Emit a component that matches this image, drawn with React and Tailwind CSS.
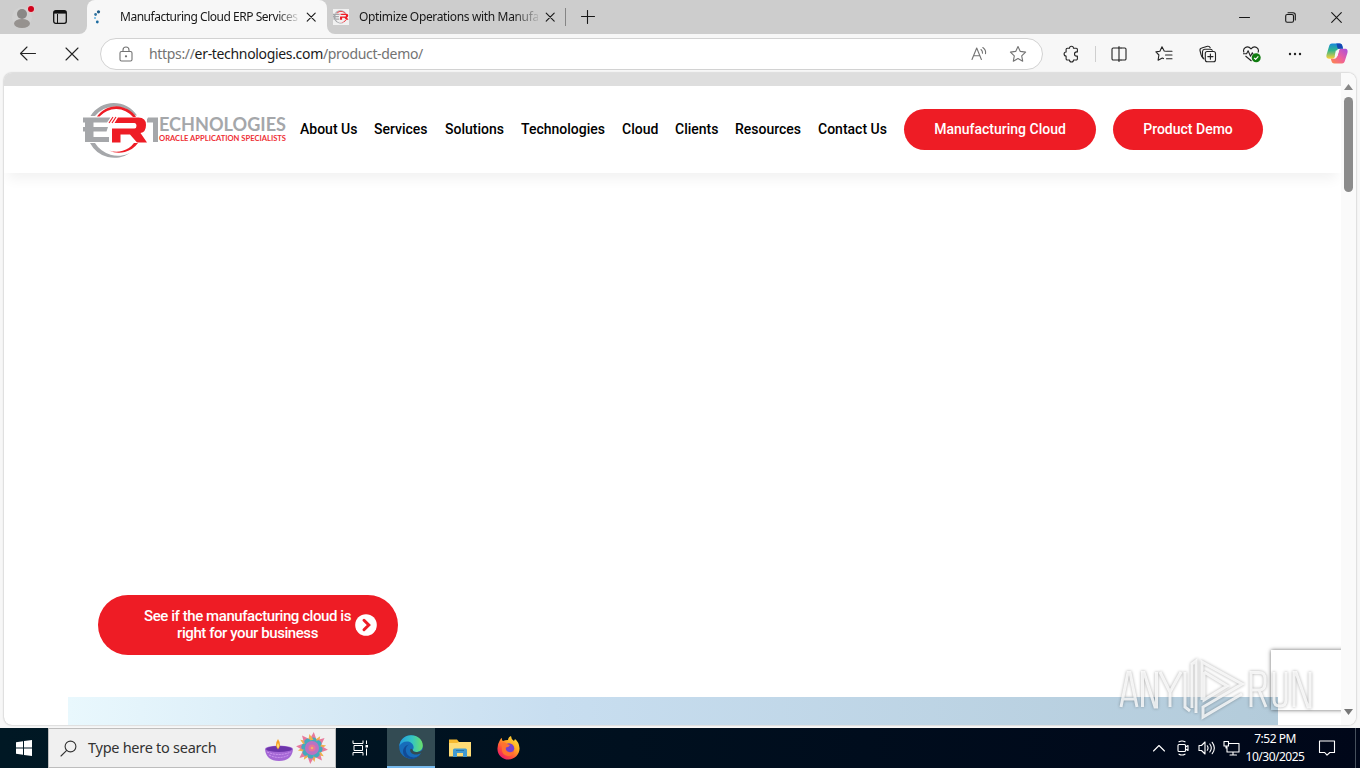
const navLinks = [
  { label: 'About Us', width: 'w-[57px]' },
  { label: 'Services', width: 'w-[54px]' },
  { label: 'Solutions', width: 'w-[59px]' },
  { label: 'Technologies', width: 'w-[84px]' },
  { label: 'Cloud', width: 'w-[36px]' },
  { label: 'Clients', width: 'w-[43px]' },
  { label: 'Resources', width: 'w-[66px]' },
  { label: 'Contact Us', width: 'w-[69px]' },
]

const Icon = ({ children, size = 18, className = '' }) => (
  <svg
    width={size}
    height={size}
    viewBox={`0 0 ${size} ${size}`}
    fill="none"
    stroke="currentColor"
    strokeWidth="1.1"
    strokeLinecap="round"
    strokeLinejoin="round"
    className={`shrink-0 ${className}`}
  >
    {children}
  </svg>
)

const CloseIcon = () => (
  <Icon size={10}>
    <path d="M1.200 1.200l8 8M9.200 1.200l-8 8" />
  </Icon>
)

const ErMark = ({ size, className = '' }) => (
  <svg
    width={size}
    height={(size * 56) / 66}
    viewBox="0 0 66 56"
    className={`shrink-0 ${className}`}
  >
    <path
      d="M7.500 14A27.500 27.500 0 0 1 54 13.500L51.500 13.500A25.500 25.500 0 0 0 12 14ZM7 41A27.500 27.500 0 0 0 47 51A27 27 0 0 1 12 41Z"
      fill="#a5a7aa"
    />
    <path
      d="M14 14.500A23.500 23.500 0 0 1 53 15L50 15A22 22 0 0 0 16.500 14.500ZM26 48.500A23.500 23.500 0 0 0 55 41L51 41A22 22 0 0 1 26 48.500Z"
      fill="#ee1c25"
    />
    <path
      d="M0 15.500H27.500L24 20.500H10.500V25H25L23.500 29.500H10.500V35H26V40H2V29.500H0V25H2V20.500H0Z"
      fill="#a5a7aa"
    />
    <path d="M26 21L30 15M29 21L33 15" stroke="#ee1c25" strokeWidth="1.2" />
    <path
      d="M35 15.500H55.500Q63 15.500 63 23Q63 30 57.500 31L64 40.500H54L47 32.500H37.500V40.500H29V26.500H51.500Q53.500 26.500 53.500 23.800T51.500 21H31.500Z"
      fill="#ee1c25"
    />
  </svg>
)

const TabStrip = () => (
  <div className="flex h-[34px] shrink-0 bg-[#f7f7f7]">
    <div className="flex w-[87px] shrink-0 items-center rounded-br-lg bg-[#cdcdcd] pl-3">
      <svg width="24" height="28" viewBox="0 0 24 28">
        <circle cx="10" cy="14" r="10" fill="#d6d6d6" opacity=".5" />
        <circle cx="10" cy="11" r="5" fill="#8a8886" />
        <ellipse cx="10" cy="20.500" rx="8" ry="4.500" fill="#96928f" />
        <circle cx="19" cy="6" r="4" fill="#e7c6c8" />
        <circle cx="19" cy="6" r="3" fill="#d0021b" />
      </svg>
      <svg
        width="14"
        height="14"
        viewBox="0 0 14 14"
        fill="none"
        stroke="#111"
        className="ml-[17px]"
      >
        <rect x=".7" y=".7" width="12.6" height="12.6" rx="2" strokeWidth="1.3" />
        <path d="M1 2.300h12" strokeWidth="2.600" />
        <path d="M4.500 4v9" />
      </svg>
    </div>

    <div className="flex w-[240px] shrink-0 bg-[#cdcdcd]">
      <div className="flex grow items-center rounded-t-lg bg-[#f7f7f7] pl-[6px]">
        <svg width="12" height="16" viewBox="0 0 12 16" fill="none">
          <circle cx="5.500" cy="2.800" r="1.600" fill="#1d5b87" />
          <circle cx="2.600" cy="5.500" r="1.400" fill="#3476a2" />
          <circle cx="2" cy="9" r="1" fill="#64b4e2" />
          <circle cx="4.300" cy="13" r="1.400" fill="#1b6ba0" />
        </svg>
        <span className="ml-[15px] w-[178px] overflow-hidden whitespace-nowrap bg-linear-to-r from-[#171717] from-88% to-[#17171720] bg-clip-text text-[12px] tracking-[-0.48px] text-transparent">
          Manufacturing Cloud ERP Services
        </span>
        <span className="ml-[8px]">
          <CloseIcon />
        </span>
      </div>
    </div>

    <div className="flex grow rounded-bl-lg bg-[#cdcdcd]">
      <div className="flex w-[238px] shrink-0 items-center pl-[6px]">
        <span className="flex h-4 w-4 items-center justify-center bg-[#f1f1f1]">
          <ErMark size={16} />
        </span>
        <span className="ml-[10px] w-[179px] overflow-hidden whitespace-nowrap bg-linear-to-r from-[#171717] from-86% to-[#17171720] bg-clip-text text-[12px] tracking-[-0.35px] text-transparent">
          Optimize Operations with Manufa
        </span>
        <span className="ml-[7px]">
          <CloseIcon />
        </span>
      </div>

      <div className="mt-2 h-[18px] w-px bg-[#858585]" />
      <Icon size={14} className="mt-[10px] ml-[15px]">
        <path d="M6.500 .5v13M.5 6.500h13" />
      </Icon>

      <div className="ml-auto flex items-center gap-[35px] pr-[18px]">
        <Icon size={11}>
          <path d="M.5 5.500h10" />
        </Icon>
        <Icon size={11}>
          <rect x=".7" y="2.500" width="7.800" height="7.800" rx="1.500" />
          <path d="M3 .7h5a2.300 2.300 0 0 1 2.300 2.300v5" />
        </Icon>
        <Icon size={11}>
          <path d="M.7.7l9.600 9.600M10.300 .7L.7 10.300" />
        </Icon>
      </div>
    </div>
  </div>
)

const Toolbar = () => (
  <div className="flex h-[39px] shrink-0 items-center bg-[#f7f7f7] text-[#242424]">
    <Icon size={18} className="ml-[19px]">
      <path d="M1.500 8.500h15M8 2L1.500 8.500L8 15" />
    </Icon>
    <Icon size={14} className="ml-[28px]">
      <path d="M1 1l12 12M13 1L1 13" />
    </Icon>

    <div className="ml-[21px] flex h-8 w-[943px] shrink-0 items-center rounded-full border border-[#d2d2d2] bg-white text-[#737373]">
      <Icon size={16} className="ml-[17px]">
        <rect x="2" y="5.500" width="12" height="9.500" rx="1.500" />
        <path d="M5 5.500V4a3 3 0 0 1 6 0v1.500" />
        <circle cx="8" cy="10.300" r=".6" fill="currentColor" />
      </Icon>
      <span className="ml-[15px] text-[14px] tracking-[-0.33px] whitespace-nowrap">
        https://<span className="text-[#1b1b1b]">er-technologies.com</span>
        /product-demo/
      </span>
      <Icon size={18} className="mr-[21px] ml-auto">
        <path d="M2 14.500L6.700 3l4.700 11.500M3.600 10.800h6.200M11 4.500c1.200 1 1.700 2.200 1.500 3.700M12.800 2.500c2.200 1.500 3.200 3.700 2.700 6.200" />
      </Icon>
      <Icon size={18} className="mr-[15px]">
        <path d="M9 1.500l2.300 4.900 5.300.7-3.900 3.700 1 5.400L9 13.600l-4.700 2.600 1-5.400L1.400 7.100l5.300-.7z" />
      </Icon>
    </div>

    <Icon size={18} className="ml-[19px]">
      <path d="M5.300 3.300h2.200a2 2 0 0 1 4 0h2.700a1.200 1.200 0 0 1 1.200 1.200v2.400h-.8a2 2 0 0 0 0 4.200h.8v2.700a1.200 1.200 0 0 1-1.200 1.200h-2.700a2 2 0 0 1-4 0H5.300a1.200 1.200 0 0 1-1.200-1.200V11a2 2 0 0 1 0-4V4.500a1.200 1.200 0 0 1 1.200-1.200z" />
    </Icon>
    <div className="ml-[15px] h-4 w-px bg-[#cfcfcf]" />
    <Icon size={18} className="ml-[14px]">
      <path d="M7 3H3.200A1.200 1.200 0 0 0 2 4.200v9.600A1.200 1.200 0 0 0 3.200 15H7M11 3h3.800A1.200 1.200 0 0 1 16 4.200v9.600a1.200 1.200 0 0 1-1.200 1.200H11M7 3H9M7 15H9M9 1.500v15" />
      <path d="M11 3H9M11 15H9" />
    </Icon>
    <Icon size={18} className="ml-[27px]">
      <path d="M10.500 6.200l-1.300-.2L7 1.800 4.900 6.300.9 6.900l3 3.100-.8 5.200L7.300 13l1.200.6M11.500 6.300H17M10.500 10H17M11.500 13.700H17" />
    </Icon>
    <Icon size={18} className="ml-[26px]">
      <path d="M4 12.800Q2.300 11.500 2 9.500L1 5.500Q.7 3.500 2.700 3L8.500 1.300Q10.500 1 11.200 2.800" />
      <path d="M5 14Q3.500 13 3.500 11.500V6.500Q3.700 4.500 5.700 4.300H11Q12.700 4.300 13.300 5.200" />
      <rect x="6.300" y="6.500" width="10.200" height="10.200" rx="2" />
      <path d="M11.400 9v5.200M8.800 11.600H14" />
    </Icon>
    <svg
      width="20"
      height="18"
      viewBox="0 0 20 18"
      fill="none"
      stroke="#242424"
      strokeWidth="1.1"
      strokeLinejoin="round"
      className="ml-[25px] shrink-0"
    >
      <path d="M2 7.500C.2 3.500 5.200-.5 9 3.800C12.800-.5 17.800 3.500 16 7.500M3.500 11L9.500 16M1 8.700h3.600l1.500-3 2.400 5.600 1.800-3.500 1 1.700" />
      <circle cx="14.200" cy="12.700" r="4.500" fill="#107c10" stroke="none" />
      <path d="M12.100 12.800l1.500 1.500 2.700-3" stroke="white" />
    </svg>
    <svg width="14" height="4" viewBox="0 0 14 4" className="ml-[26px] shrink-0">
      <circle cx="2" cy="2" r="1.200" fill="#222" />
      <circle cx="7" cy="2" r="1.200" fill="#222" />
      <circle cx="12" cy="2" r="1.200" fill="#222" />
    </svg>
    <svg width="22" height="21" viewBox="0 0 22 21" className="ml-[24px] shrink-0">
      <defs>
        <linearGradient id="copilotLeft" x1="0" y1="0" x2="0" y2="1">
          <stop offset="0" stopColor="#1689dc" />
          <stop offset=".45" stopColor="#32b58a" />
          <stop offset="1" stopColor="#ffd036" />
        </linearGradient>
        <linearGradient id="copilotRight" x1="1" y1="0" x2="0" y2="1">
          <stop offset="0" stopColor="#a64ee0" />
          <stop offset=".5" stopColor="#ed5f9d" />
          <stop offset="1" stopColor="#ff8946" />
        </linearGradient>
      </defs>
      <path
        d="M6 .5h7.500c2 0 2.600 1.300 3 3l.5 2.200h-3.500c-2 0-2.500 1.200-3 2.800L8.700 14c-.5 1.200-1.200 1.700-2.500 1.700H3C.5 15.700 0 13.500.6 11.500L3 3.500C3.500 1.500 4.300.5 6 .5z"
        fill="url(#copilotLeft)"
      />
      <path d="M10 .5h3.500c2 0 2.600 1.300 3 3l.5 2.200h-4.500C10.500 5.500 11.500 1 10 .5z" fill="#1548b6" />
      <path
        d="M16 20.500H8.500c-2 0-2.700-1.300-3.200-3l-.5-1.800h3.400c1.900 0 2.500-1.200 3-2.800l1.900-5.500c.5-1.300 1.200-1.700 2.500-1.700H19c2.500 0 3 2.200 2.400 4.200L19 17.500c-.5 2-1.300 3-3 3z"
        fill="url(#copilotRight)"
      />
      <path d="M9.800 7.500H13L11.500 13.300H8.700Z" fill="#f7f7f7" />
    </svg>
  </div>
)

const Logo = () => (
  <div className="flex h-14 w-[203px] shrink-0 items-start">
    <ErMark size={66} />
    <svg width="140" height="56" viewBox="64 0 140 56" className="-ml-[2px] shrink-0">
      <path d="M65 15.500H75V40H70V20.500H62Z" fill="#a5a7aa" />
      <text
        x="76"
        y="29"
        fill="#a5a7aa"
        fontFamily="Lato, sans-serif"
        fontWeight="700"
        fontSize="18"
        textLength="127"
        lengthAdjust="spacingAndGlyphs"
      >
        ECHNOLOGIES
      </text>
      <text
        x="76"
        y="38.500"
        fill="#ee2e35"
        fontFamily="Lato, sans-serif"
        fontWeight="700"
        fontSize="7.500"
        textLength="127"
        lengthAdjust="spacingAndGlyphs"
      >
        ORACLE APPLICATION SPECIALISTS
      </text>
    </svg>
  </div>
)

const SiteHeader = () => (
  <header className="relative flex h-[87px] shrink-0 items-center bg-white pl-[79px] font-[Roboto,sans-serif] text-[14px] font-medium shadow-[0_10px_12px_-4px_rgba(0,0,0,0.055)]">
    <Logo />
    <nav className="ml-[14px] flex gap-[17px] text-black">
      {navLinks.map((link) => (
        <a key={link.label} className={`${link.width} whitespace-nowrap`}>
          {link.label}
        </a>
      ))}
    </nav>
    <a className="ml-[17px] flex h-[41px] w-[192px] items-center justify-center rounded-full bg-[#ee1c25] text-white">
      Manufacturing Cloud
    </a>
    <a className="ml-[17px] flex h-[41px] w-[150px] items-center justify-center rounded-full bg-[#ee1c25] text-white">
      Product Demo
    </a>
  </header>
)

const Watermark = () => (
  <svg
    width="204"
    height="68"
    viewBox="0 0 204 68"
    className="absolute right-[40px] bottom-0 drop-shadow-[0_0_1.5px_rgba(0,0,0,0.4)]"
    fill="none"
    stroke="white"
    strokeOpacity=".8"
    strokeWidth="3"
  >
    <path d="M9 50L16 15.500H18L25 50M11 42H23M30.500 50V15.500H32L43 50H44.500V15M48 15L58 35V50M58 35L69 15" />
    <path d="M73 15V50L78 54M80 51V7L84 4V56M90 43V5L130 27L91 50V60L130 37M92 15V43L115 29L92 15" />
    <path d="M139 50V15.500H147Q153 15.500 153 22V26Q153 33 147 33H139M147 33L154 50M162 15V43Q162 49 168 49Q174 49 174 43V15M182 50V15.500H184L196 50H198V15" />
  </svg>
)

const PageView = () => (
  <div className="relative mx-1 flex h-[652px] shrink-0 overflow-hidden rounded-lg bg-white shadow-[0_0_2px_rgba(0,0,0,0.35)]">
    <div className="flex w-[1337px] flex-col overflow-hidden">
      <div className="h-[13px] shrink-0 bg-[#dedede]" />
      <SiteHeader />
      <main className="relative flex grow flex-col pt-[422px]">
        <a className="ml-[94px] flex h-[60px] w-[300px] shrink-0 items-center rounded-full bg-[#ee1c25] pl-[45px] font-[Roboto,sans-serif] text-[15px] leading-[17px] font-medium tracking-[-0.43px] text-white">
          <span className="w-[209px] text-center whitespace-nowrap">
            See if the manufacturing cloud is
            <br />
            right for your business
          </span>
          <svg width="22" height="22" viewBox="0 0 22 22" className="ml-[3px]">
            <circle cx="11" cy="11" r="10.800" fill="white" />
            <path
              d="M9 6.300L13.800 11L9 15.700"
              fill="none"
              stroke="#ee1c25"
              strokeWidth="3"
              strokeLinecap="round"
            />
          </svg>
        </a>
        <div className="mt-[42px] ml-16 h-[28px] w-[1210px] shrink-0 bg-linear-to-r from-[#e9f8fd] via-[#c8def0] via-40% to-[#b3cbda]" />
        <div className="absolute right-[-10px] bottom-[15px] h-[60px] w-20 shadow-[0_0_4px_rgba(0,0,0,0.6)]" />
      </main>
    </div>
    <div className="flex w-[15px] flex-col items-center justify-between bg-[#fafafa] pt-[11px] pb-[10px]">
      <div className="flex flex-col items-center gap-[7px]">
        <svg width="9" height="6" viewBox="0 0 9 6">
          <path d="M0 6L4.500 0L9 6Z" fill="#888" />
        </svg>
        <div className="h-[95px] w-[9px] rounded-full bg-[#8b8b8b]" />
      </div>
      <svg width="9" height="6" viewBox="0 0 9 6">
        <path d="M0 0L4.500 6L9 0Z" fill="#777" />
      </svg>
    </div>
    <Watermark />
  </div>
)

const FestiveIcons = () => (
  <svg width="64" height="34" viewBox="0 0 64 34" className="ml-auto shrink-0">
    <path d="M1 18Q1 15 15 14.500Q29 15 29 18Q28 30 15 30Q2 30 1 18Z" fill="#a467d5" />
    <ellipse cx="15" cy="18" rx="13" ry="3" fill="#6c35aa" />
    <path d="M3 21Q15 26 27 21M5 24Q15 29 25 24" stroke="#d19af1" fill="none" strokeDasharray="2 1" />
    <path d="M14 8Q18 14 14 18.500Q10 14 14 8Z" fill="#f6a027" />
    <path d="M14 12Q16 15 14 17.500Q12 15 14 12Z" fill="#ffe274" />
    <g transform="translate(48 17)">
      {[0, 45, 90, 135, 180, 225, 270, 315].map((angle) => (
        <g key={angle} transform={`rotate(${angle + 10})`}>
          <path d="M-3.500 -9L-1 -16L3 -9Z" fill="#e8799b" />
          <path d="M1 -8L6 -13L6 -6Z" fill="#efb24a" />
          <circle cx="0" cy="-7.500" r="3.200" fill="#45a9bd" />
        </g>
      ))}
      <circle r="7" fill="#b873c4" />
      <circle r="3.500" fill="#e8739b" />
      <circle r="1.300" fill="#f0b070" />
    </g>
  </svg>
)

const EdgeIcon = () => (
  <svg width="24" height="24" viewBox="0 0 24 24">
    <defs>
      <linearGradient id="edgeTop">
        <stop stopColor="#239de0" />
        <stop offset=".55" stopColor="#35c5c1" />
        <stop offset="1" stopColor="#6bdf68" />
      </linearGradient>
    </defs>
    <circle cx="12" cy="12" r="11.800" fill="#176cba" />
    <path
      d="M.3 11C1 4.500 6 .2 12 .2c6.800 0 11.800 4.700 11.800 10.300 0 4.300-3.300 6.500-6.500 6.500-2.700 0-4-1.100-3.600-2 .8-1.200 1-1.700.9-2.900C14.400 8.500 11 6.500 8 6.500 4.500 6.500 1.800 8.400.3 11z"
      fill="url(#edgeTop)"
    />
    <path
      d="M10 9.500c-4 2-4.500 8.500 0 11.500 4 2.600 8 1.500 11.500-1.500C18 24 12 25 8 22.800 2 20 3 11 10 9.500z"
      fill="#124b96"
    />
    <path d="M13.700 15C12 12 10 15 12 17.500c2.200 2.500 6.500 2.800 11 .3L24 14.500Q21 17.500 17 17Q14 16.800 13.700 15z" fill="#334b53" />
  </svg>
)

const Taskbar = () => (
  <footer className="mt-auto flex h-10 shrink-0 items-center bg-linear-to-r from-[#001824] to-[#000719] text-white">
    <div className="flex w-12 shrink-0 items-center justify-center">
      <svg width="16" height="16" viewBox="0 0 16 16" fill="white">
        <path d="M0 2.300L7 1.200V7.500H0ZM8 1L16 0V7.500H8ZM0 8.500H7V14.800L0 13.700ZM8 8.500H16V16L8 15Z" />
      </svg>
    </div>
    <div className="flex h-10 w-[288px] shrink-0 items-center border border-[#bdbdbd] bg-[#f0f0f0] pr-[7px] pl-[11px] text-[#333]">
      <Icon size={17}>
        <circle cx="10.500" cy="6.500" r="5.400" />
        <path d="M6.700 10.300L1 16" />
      </Icon>
      <span className="ml-[11px] text-[14.5px] tracking-[-0.27px] whitespace-nowrap">
        Type here to search
      </span>
      <FestiveIcons />
    </div>
    <div className="flex w-[51px] items-center justify-center pr-[2px]">
      <svg width="17" height="16" viewBox="0 0 17 16" fill="none" stroke="white">
        <path d="M1 .5V3.500H11V.5M1 15.500V12.500H11V15.500M2 5.500H10.500V10.500H2ZM14.500 .5V4M14.500 8.500V15.500" />
        <rect x="13.500" y="5" width="2.500" height="2.500" fill="white" stroke="none" />
      </svg>
    </div>
    <div className="flex h-10 w-12 items-center justify-center border-b-2 border-[#76b9ed] bg-[#334b53]">
      <EdgeIcon />
    </div>
    <div className="flex w-[49px] items-center justify-center">
      <svg width="22" height="20" viewBox="0 0 22 20">
        <path d="M0 1.500H8L10 4H22V18H0Z" fill="#f7b92f" />
        <path d="M0 5H8L10 4H22V18.500H0Z" fill="#ffdc76" />
        <path d="M4 19V12Q4 10.500 5.500 10.500H16.500Q18 10.500 18 12V19H14V15H8V19Z" fill="#439bd1" />
        <path d="M7 12.500H15" stroke="#2777ac" />
      </svg>
    </div>
    <div className="flex w-[49px] items-center justify-center">
      <svg width="23" height="24" viewBox="0 0 23 24">
        <defs>
          <linearGradient id="foxFlame" x1="1" y1="0" x2=".2" y2="1">
            <stop stopColor="#fff04a" />
            <stop offset=".4" stopColor="#ffac22" />
            <stop offset=".75" stopColor="#ff493d" />
            <stop offset="1" stopColor="#e51473" />
          </linearGradient>
        </defs>
        <path
          d="M3 4Q4 2 5 2Q4.500 4 6 5Q8 4 11 4Q11 1 14 0Q14 3 17 5L18 3Q22 6 22.500 12C23 18 18 23.500 11.500 23.500S0 18.500 .5 12Q.5 8 3 4Z"
          fill="url(#foxFlame)"
        />
        <circle cx="12" cy="12.500" r="5.300" fill="#7540cf" />
        <path d="M4 7Q7 5 10 8L13 9Q12 11 9 11.500Q8 15 12 16Q15 17 17 14Q17 20 11 20Q4 19 5 11Z" fill="#ff7130" />
      </svg>
    </div>

    <div className="ml-auto flex shrink-0 items-center">
      <Icon size={12}>
        <path d="M.5 9L6 3.500L11.500 9" />
      </Icon>
      <Icon size={16} className="ml-[10px]">
        <rect x="3" y="4.500" width="7.500" height="7" rx="1" />
        <path d="M10.500 7l2.500-1.500v5L10.500 9M4 1.800Q7 .2 10 1.800M4 14.200q3 1.600 6 0" />
      </Icon>
      <Icon size={18} className="ml-[7px]">
        <path d="M1 6.500h2.500L7 3v12l-3.500-3.500H1zM9.300 6.800q1.500 2.200 0 4.400M11.800 5q3 4 0 8M14.200 3.300q4.300 5.700 0 11.400" />
      </Icon>
      <Icon size={17} className="ml-[7px]">
        <path d="M6 3.500h10v8.500H4V7M10 12v3M7 15h6.500M1 1.500h4.500V6H1zM3 6v2h1" />
      </Icon>
      <div className="ml-[5px] w-[60px] text-center text-[12px] leading-[18px] tracking-[-0.5px] whitespace-nowrap">
        <div>7:52 PM</div>
        <div>10/30/2025</div>
      </div>
      <Icon size={18} className="ml-[13px]">
        <path d="M1.500 2h15v11.500h-4.700L9 16.200l-2.300-2.700H1.500z" />
      </Icon>
      <div className="ml-[19px] h-10 w-px bg-[#46505c]" />
      <div className="w-1" />
    </div>
  </footer>
)

const App = () => {
  return (
    <div className="flex h-[768px] w-[1360px] flex-col overflow-hidden bg-[#f7f7f7] font-['Noto_Sans',sans-serif] text-[#171717]">
      <TabStrip />
      <Toolbar />
      <PageView />
      <Taskbar />
    </div>
  )
}

export default App
